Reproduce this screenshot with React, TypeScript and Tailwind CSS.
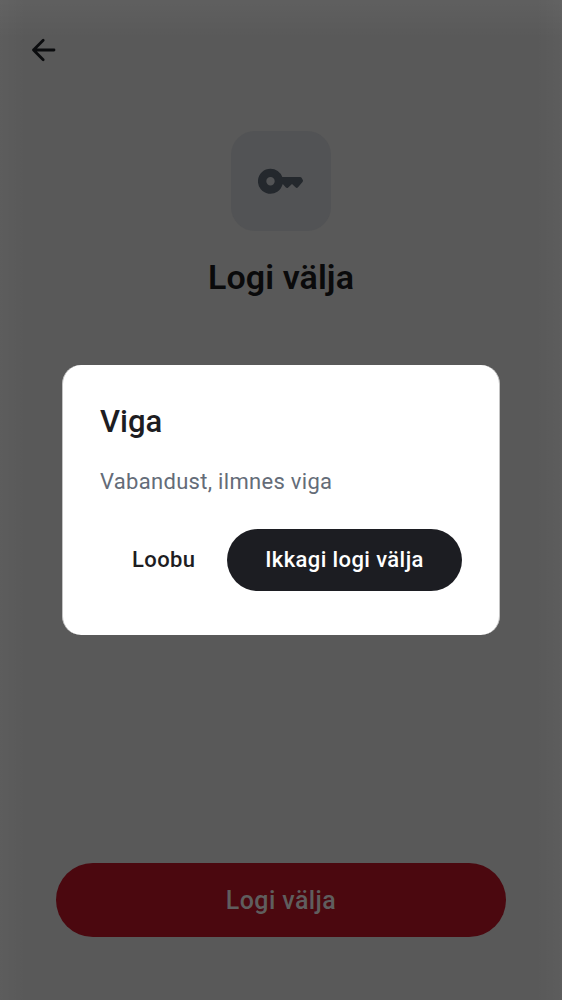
export default function App() {
  return (
    <div className="flex h-[1000px] w-[562px] flex-col items-center overflow-hidden bg-[#595959] bg-[linear-gradient(to_bottom,rgba(255,255,255,0.04)_0px,rgba(255,255,255,0)_38px),linear-gradient(to_right,rgba(255,255,255,0.025)_0px,rgba(255,255,255,0)_26px,rgba(255,255,255,0)_536px,rgba(255,255,255,0.025)_562px)] font-['Roboto',sans-serif]">
      <header className="flex h-[131px] w-full pt-[34px] pl-[28px]">
        <svg width="32" height="32" viewBox="0 0 32 32" fill="none" stroke="#0b0c0e" strokeWidth="2.8" strokeLinecap="round" strokeLinejoin="round"><path d="M26 16H5.5M15.2 6.3 5.5 16l9.7 9.7" /></svg>
      </header>
      <div className="flex size-[100px] items-center justify-center rounded-[24px] bg-[#525355]">
        <svg width="46" height="26" viewBox="0 0 46 26" fill="#24282d"><path fillRule="evenodd" d="M12.5.8a12.5 12.5 0 0 1 11.8 8.3H42q1 0 1.6.7l1.2 2.2q.5 1.1-.3 2L40 19.3q-1.2 1.3-2.5 0L34 16.1l-3.8 3.4q-1.3 1.1-2.5-.2L25 16.3h-.4A12.5 12.5 0 1 1 12.5.8Zm0 8.3a4.2 4.2 0 1 0 0 8.4 4.2 4.2 0 0 0 0-8.4Z" /></svg>
      </div>
      <h1 className="mt-[26px] text-[34px] leading-[40px] font-semibold tracking-[0.1px] text-[#0a0a0b]">Logi välja</h1>
      <section role="dialog" className="mt-[68px] flex h-[270px] w-[438px] flex-col rounded-[19px] border-x border-[#c4c4c4] bg-white px-[37px]">
        <h2 className="mt-[37px] text-[31px] leading-[40px] font-medium text-[#1d1d22]">Viga</h2>
        <p className="mt-[26px] text-[22px] leading-[28px] tracking-[0.3px] text-[#646c78]">Vabandust, ilmnes viga</p>
        <div className="mt-[33px] flex items-center justify-end gap-[31.5px] text-[22px] font-medium tracking-[0.4px]">
          <button className="pb-px font-[460] text-[#1d1d22]">Loobu</button>
          <button className="h-[62px] w-[235px] rounded-full bg-[#1c1d22] pb-[2px] text-white">Ikkagi logi välja</button>
        </div>
      </section>
      <button className="mt-[228px] h-[74px] w-[450px] rounded-full bg-[#4b080f] pt-[2px] text-[25px] font-medium tracking-[0.4px] text-[#5f5e5e]">Logi välja</button>
    </div>
  );
}
